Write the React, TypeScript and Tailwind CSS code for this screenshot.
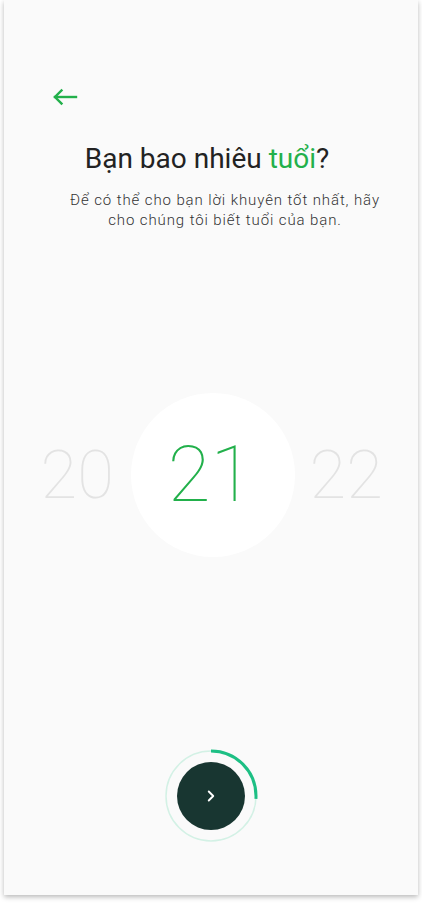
import { ChevronRight } from "lucide-react";

function BackArrow() {
  return (
    <svg width="26" height="18" viewBox="0 0 26 18" fill="none" stroke="#22b04b" strokeWidth="2.4" strokeLinecap="square">
      <path d="M24 9H3" />
      <path d="M9.5 2.5L3 9l6.5 6.5" />
    </svg>
  );
}

function ProgressRing() {
  const r = 45;
  const c = 2 * Math.PI * r;
  const progress = 0.26;
  return (
    <svg width="96" height="96" viewBox="0 0 96 96" className="absolute inset-0">
      <circle cx="48" cy="48" r={r} fill="none" stroke="#d3f1e5" strokeWidth="1.5" />
      <circle
        cx="48"
        cy="48"
        r={r}
        fill="none"
        stroke="#1dbf84"
        strokeWidth="3"
        strokeDasharray={`${c * progress} ${c}`}
        transform="rotate(-90 48 48)"
      />
    </svg>
  );
}

export default function App() {
  return (
    <div className="min-h-[904px] bg-white">
      <div className="mx-[4px] h-[895px] bg-[#fafafa] shadow-[0_2px_5px_rgba(0,0,0,0.28)] flex flex-col font-['Roboto',sans-serif]">
        <div className="pt-[88px] pl-[48px]">
          <BackArrow />
        </div>

        <h1 className="mt-[36px] text-center text-[28px] leading-[34px] text-[#222] pr-[8px]">
          Bạn bao nhiêu <span className="text-[#22b04b]">tuổi</span>?
        </h1>
        <p className="mt-[14px] pl-[28px] text-center text-[15px] font-light leading-[20px] tracking-[0.9px] text-[#333]">
          Để có thể cho bạn lời khuyên tốt nhất, hãy
          <br />
          cho chúng tôi biết tuổi của bạn.
        </p>

        <div className="mt-[163px] flex items-center justify-center">
          <span className="w-[72px] mr-[18px] text-center text-[67px] font-thin leading-none text-[#e3e3e3]">20</span>
          <div className="w-[164px] h-[164px] rounded-full bg-white flex items-center justify-center">
            <span className="text-[78px] font-thin leading-none text-[#22b04b] pr-[4px]">21</span>
          </div>
          <span className="w-[72px] ml-[15px] text-center text-[67px] font-thin leading-none text-[#e3e3e3]">22</span>
        </div>

        <div className="mt-auto mb-[51px] flex justify-center">
          <div className="relative w-[96px] h-[96px] flex items-center justify-center">
            <ProgressRing />
            <button className="relative w-[68px] h-[68px] rounded-full bg-[#183631] flex items-center justify-center">
              <ChevronRight className="text-white" size={18} strokeWidth={2.5} />
            </button>
          </div>
        </div>
      </div>
    </div>
  );
}
